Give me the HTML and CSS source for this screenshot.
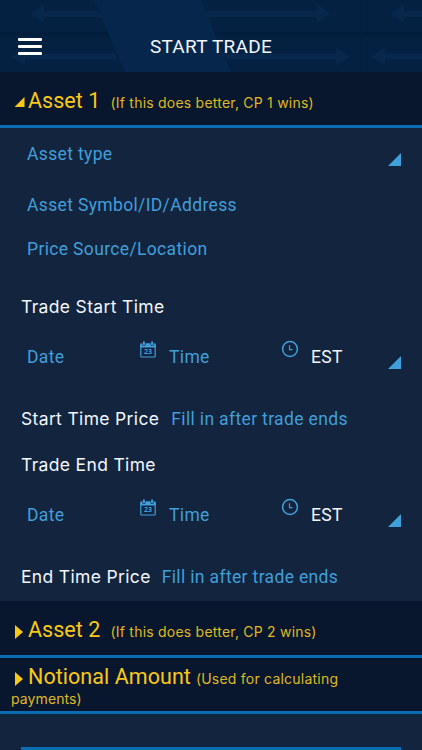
FILE: index.html
```html
<!DOCTYPE html>
<html lang="en">
<head>
<meta charset="utf-8">
<title>Start Trade</title>
<link rel="stylesheet" href="styles.css">
</head>
<body>
<svg class="defs" width="0" height="0" aria-hidden="true">
  <symbol id="cal" viewBox="0 0 16 17">
    <path d="M.5 2.500h15v4H.5z" fill="currentColor"/>
    <rect x=".8" y="3" width="14.4" height="13" rx="1" fill="none" stroke="currentColor" stroke-width="1.2"/>
    <path d="M3.900 1v2.400M12.100 1v2.400" stroke="#12243e" stroke-width="3.200" stroke-linecap="round"/>
    <path d="M3.900 1.300v2.200M12.100 1.300v2.200" stroke="currentColor" stroke-width="2" stroke-linecap="round"/>
  </symbol>
  <symbol id="clock" viewBox="0 0 18 18">
    <circle cx="9" cy="9" r="7.400" fill="none" stroke="currentColor" stroke-width="1.500"/>
    <path d="M8.500 5.300v4.400h3" fill="none" stroke="currentColor" stroke-width="1.200"/>
  </symbol>
</svg>
<header class="header">
  <svg class="pattern" viewBox="0 0 422 72" width="422" height="72" aria-hidden="true">
    <rect width="422" height="72" fill="#042142"/>
    <path d="M0 32h422v4H0z" fill="#031e3d"/>
    <path d="M94 0h107l30 72H125z" fill="#06274b"/>
    <path d="M30 13.500 44 4v7h55l3 6H44v6zM11 56.500l14-9v6h90l3 6H25v6zM331 13.500 317 4v7H204l3 6h110v6zM350 56.500l-14-9v6H224l3 6h109v6zM390 13.500 404 4v7h18v6h-18v6zM371 56.500l14-9v6h37v6h-37v6z" fill="#07274b"/>
    <path d="M361.500 0v72" stroke="#031e3d"/>
  </svg>
  <div class="menu"><i></i><i></i><i></i></div>
  <h1 class="title">START TRADE</h1>
</header>
<section class="bar bar-one">
  <svg class="mark-open" viewBox="0 0 10 10"><path d="M10 0v10H0z" fill="currentColor"/></svg>
  <h2 class="name">Asset 1</h2><span class="note">(If this does better, CP 1 wins)</span>
</section>
<main class="form">
  <div class="row type"><span class="field">Asset type</span><svg class="corner" viewBox="0 0 13 13"><path d="M13 0v13H0z" fill="currentColor"/></svg></div>
  <div class="row symbol"><span class="field">Asset Symbol/ID/Address</span></div>
  <div class="row source"><span class="field">Price Source/Location</span></div>
  <div class="row start-label"><span class="label">Trade Start Time</span></div>
  <div class="row time start-time">
    <span class="field date">Date</span><span class="cal"><svg viewBox="0 0 16 17"><use href="#cal"/></svg><b>23</b></span>
    <span class="field hour">Time</span><svg class="clock"><use href="#clock"/></svg>
    <span class="zone">EST</span><svg class="corner" viewBox="0 0 13 13"><path d="M13 0v13H0z" fill="currentColor"/></svg>
  </div>
  <div class="row start-price"><span class="label">Start Time Price</span><span class="fill">Fill in after trade ends</span></div>
  <div class="row end-label"><span class="label">Trade End Time</span></div>
  <div class="row time end-time">
    <span class="field date">Date</span><span class="cal"><svg viewBox="0 0 16 17"><use href="#cal"/></svg><b>23</b></span>
    <span class="field hour">Time</span><svg class="clock"><use href="#clock"/></svg>
    <span class="zone">EST</span><svg class="corner" viewBox="0 0 13 13"><path d="M13 0v13H0z" fill="currentColor"/></svg>
  </div>
  <div class="row end-price"><span class="label">End Time Price</span><span class="fill">Fill in after trade ends</span></div>
</main>
<section class="bar bar-two">
  <svg class="mark" viewBox="0 0 8 14"><path d="M0 0l8 7-8 7z" fill="currentColor"/></svg>
  <h2 class="name">Asset 2</h2><span class="note">(If this does better, CP 2 wins)</span>
</section>
<section class="bar bar-three">
  <div class="line"><svg class="mark" viewBox="0 0 8 14"><path d="M0 0l8 7-8 7z" fill="currentColor"/></svg>
  <h2 class="name">Notional Amount</h2><span class="note">(Used for calculating</span></div>
  <span class="note rest">payments)</span>
</section>
<footer class="next"><div class="panel"></div></footer>
</body>
</html>
```
FILE: styles.css
```css
* { box-sizing: border-box; }
html, body { margin: 0; height: 750px; overflow: hidden; }
body { width: 422px; background: #12243e; color: #f3f7fc; font-family: Roboto, sans-serif; }
svg { display: block; flex: none; }
.defs { position: absolute; }
h1, h2 { margin: 0; font-weight: 400; }
span, h1, h2 { white-space: nowrap; }

.header { position: relative; height: 72px; }
.pattern { position: absolute; left: 0; top: 0; }
.menu { position: absolute; left: 18px; top: 38px; width: 24px; display: grid; gap: 4px; }
.menu i { height: 3px; border-radius: 1px; background: #fff; }
.title { position: relative; padding-top: 32px; line-height: 29px; font-size: 19px; letter-spacing: .25px; text-align: center; }

.bar { background: #09172e; color: #f8c817; border-bottom: 3px solid #0b6cb3; display: flex; }
.bar-one { height: 56px; padding: 12px 0 0 14px; }
.bar-two { height: 57px; padding: 12px 0 0 15px; }
.bar-three { height: 56px; padding: 2px 0 0 15px; flex-direction: column; }
.line { display: flex; height: 33px; }
.name { font-size: 21.500px; line-height: 33px; letter-spacing: .05px; }
.note { font-family: Inter, sans-serif; font-size: 14px; letter-spacing: .22px; line-height: 37px; color: #dfb924; }
.mark-open { width: 11px; height: 10px; margin: 13px 3px 0 0; }
.mark { width: 8px; height: 14px; margin: 12px 5px 0 0; }
.bar-one .name, .bar-two .name { width: 82.500px; }
.line .note { margin-left: 5px; }
.rest { line-height: 18px; margin: -3px 0 0 -4px; letter-spacing: .1px; }

.form { height: 473px; }
.row { display: flex; align-items: center; padding: 0 21px; }
.field, .fill { color: #419fda; font-size: 17.500px; letter-spacing: .35px; }
.field { padding-left: 6px; }
.label { font-family: Inter, sans-serif; font-size: 17.500px; letter-spacing: .34px; margin-top: -1px; }
.corner { width: 13px; height: 13px; margin: 11px 0 0 auto; color: #3fa1dc; }
.type { height: 52px; }
.symbol { height: 49px; }
.source { height: 40px; }
.start-label { height: 41px; margin-top: 17px; }
.start-time { height: 60px; }
.start-price { height: 64px; }
.end-label { height: 27px; }
.end-time { height: 74px; }
.end-price { height: 49px; }
.fill { margin-left: 12px; }
.end-price .fill { margin-left: 11px; }
.date { width: 119px; }
.cal { display: grid; color: #419fda; margin-bottom: 16px; }
.cal svg { width: 16px; height: 17px; grid-area: 1 / 1; }
.cal b { grid-area: 1 / 1; font: 700 7px/8px "Open Sans", sans-serif; text-align: center; padding-top: 7px; }
.hour { width: 125px; padding-left: 13px; }
.clock { width: 18px; height: 18px; color: #419fda; margin-bottom: 16px; }
.zone { font-size: 17.500px; letter-spacing: .35px; margin-left: 12px; }

.next { padding: 33px 21px 0; }
.panel { height: 3px; background: #0b6cb3; }
```
